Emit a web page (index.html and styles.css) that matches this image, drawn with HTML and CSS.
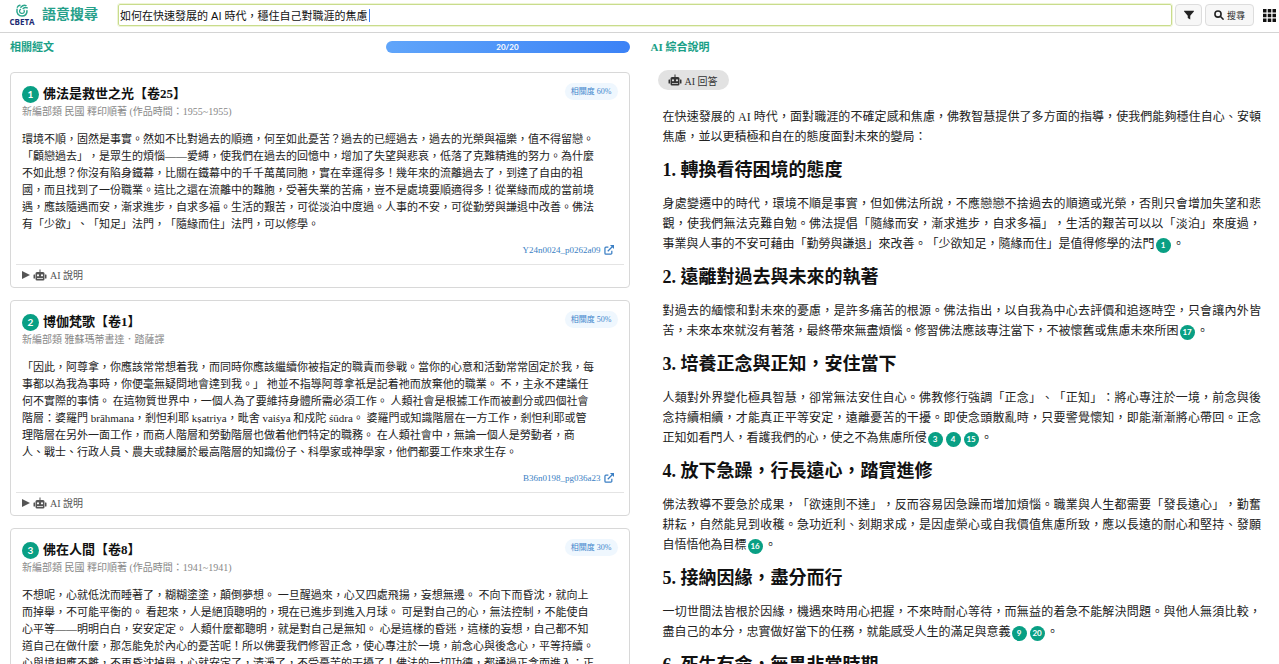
FILE: index.html
```html
<!DOCTYPE html>
<html lang="zh-Hant">
<head>
  <meta charset="UTF-8">
  <meta name="viewport" content="width=device-width, initial-scale=1.0">
  <title>CBETA 語意搜尋</title>
  <link rel="stylesheet" href="styles.css">
</head>
<body>
  <!-- shared icons -->
  <svg class="icon-defs" aria-hidden="true">
    <symbol id="icon-robot" viewBox="0 0 28 24">
      <path fill="currentColor" fill-rule="evenodd" d="M13 1h2v5h5a3 3 0 0 1 3 3v11a3 3 0 0 1-3 3H8a3 3 0 0 1-3-3V9a3 3 0 0 1 3-3h5zM10 10.500a2.200 2.200 0 1 0 0 4.400a2.200 2.200 0 1 0 0-4.400zM18 10.500a2.200 2.200 0 1 0 0 4.400a2.200 2.200 0 1 0 0-4.400zM8.500 18v1.800h3V18zM12.500 18v1.800h3V18zM16.500 18v1.800h3V18zM1 12a1 1 0 0 1 1-1h2v8H2a1 1 0 0 1-1-1zM24 11h2a1 1 0 0 1 1 1v6a1 1 0 0 1-1 1h-2z"/>
    </symbol>
    <symbol id="icon-open" viewBox="0 0 16 16">
      <path fill="none" stroke="currentColor" stroke-width="2" d="M7 3.500H3A1.500 1.500 0 0 0 1.500 5v8A1.500 1.500 0 0 0 3 14.500h8a1.500 1.500 0 0 0 1.500-1.500V9M6 10l8-8"/>
      <path fill="currentColor" d="M9.500 0H16v6.500z"/>
    </symbol>
  </svg>

  <header class="topbar">
    <a class="brand" href="#">
      <span class="logo">
        <svg viewBox="0 0 24 22" aria-hidden="true">
          <g fill="none" stroke="#2aa58c" stroke-linecap="round">
            <path stroke-width="2.600" d="M3.500 9c-1.500 7 3 11.500 8.500 11.500S21 17 20.500 11.500"/>
            <path stroke-width="2.200" d="M9.500 9c-2.500 2-2.500 6.500 1.500 7s6-2.500 4.500-5.500"/>
            <path stroke-width="2.400" d="M10 5.500C12.500 2.500 16 1.500 19 2.500M14 7.500c2-1.500 4.500-2 7-1M4 5.500c1-2 2.500-3 4.500-3.500"/>
          </g>
        </svg>
        <span class="logo-name">CBETA</span>
      </span>
      <span class="brand-title">語意搜尋</span>
    </a>
    <form class="search" onsubmit="return false">
      <input type="text" class="search-input" aria-label="搜尋問題" value="如何在快速發展的 AI 時代，穩住自己對職涯的焦慮">
      <button type="button" class="btn" aria-label="篩選">
        <svg class="icon-filter" viewBox="0 0 12 12" aria-hidden="true"><path fill="currentColor" d="M.5 1h11c.5 0 .6.500.300.900L7.500 7v4.500L4.500 9.500V7L.2 1.900C-.1 1.500 0 1 .5 1z"/></svg>
      </button>
      <button type="submit" class="btn btn-search">
        <svg class="icon-search" viewBox="0 0 12 12" aria-hidden="true"><g fill="none" stroke="currentColor" stroke-width="1.900"><circle cx="4.800" cy="4.800" r="3.700"/><path d="M7.500 7.500l4 4"/></g></svg>
        搜尋
      </button>
    </form>
    <button type="button" class="apps" aria-label="選單">
      <svg viewBox="0 0 13 13" aria-hidden="true"><path fill="#111" d="M0 0h3.500v3.500H0zM4.750 0h3.500v3.500h-3.500zM9.500 0H13v3.500H9.500zM0 4.750h3.500v3.500H0zM4.750 4.750h3.500v3.500h-3.500zM9.500 4.750H13v3.500H9.500zM0 9.500h3.500V13H0zM4.750 9.500h3.500V13h-3.500zM9.500 9.500H13V13H9.500z"/></svg>
    </button>
  </header>

  <main class="panes">
    <section class="pane results">
      <div class="pane-head">
        <h2>相關經文</h2>
        <div class="progress">20/20</div>
      </div>

      <article class="card">
        <div class="card-top">
          <span class="num">1</span>
          <h3>佛法是救世之光【卷25】</h3>
          <span class="score">相關度 60%</span>
        </div>
        <p class="meta">新編部類 民國 釋印順著 (作品時間：1955~1955)</p>
        <p class="text">環境不順，固然是事實。然如不比對過去的順適，何至如此憂苦？過去的已經過去，過去的光榮與福樂，值不得留戀。「顧戀過去」，是眾生的煩惱——愛縛，使我們在過去的回憶中，增加了失望與悲哀，低落了克難精進的努力。為什麼不如此想？你沒有陷身鐵幕，比關在鐵幕中的千千萬萬同胞，實在幸運得多！幾年來的流離過去了，到達了自由的祖國，而且找到了一份職業。這比之還在流離中的難胞，受著失業的苦痛，豈不是處境要順適得多！從業緣而成的當前境遇，應該隨遇而安，漸求進步，自求多福。生活的艱苦，可從淡泊中度過。人事的不安，可從勤勞與謙退中改善。佛法有「少欲」、「知足」法門，「隨緣而住」法門，可以修學。</p>
        <a class="source" href="#">Y24n0024_p0262a09 <svg><use href="#icon-open"/></svg></a>
        <details>
          <summary><svg class="icon-robot"><use href="#icon-robot"/></svg>AI 說明</summary>
        </details>
      </article>

      <article class="card">
        <div class="card-top">
          <span class="num">2</span>
          <h3>博伽梵歌【卷1】</h3>
          <span class="score">相關度 50%</span>
        </div>
        <p class="meta">新編部類 雅蘇瑪蒂書達．踏薩譯</p>
        <p class="text">「因此，阿尊拿，你應該常常想着我，而同時你應該繼續你被指定的職責而參戰。當你的心意和活動常常固定於我，每事都以為我為事時，你便毫無疑問地會達到我。」 祂並不指導阿尊拿祇是記着祂而放棄他的職業。 不，主永不建議任何不實際的事情。 在這物質世界中，一個人為了要維持身體所需必須工作。 人類社會是根據工作而被劃分或四個社會階層：婆羅門 brāhmana，剎怛利耶 kṣatriya，毗舍 vaiśya 和戍陀 śūdra。 婆羅門或知識階層在一方工作，剎怛利耶或管理階層在另外一面工作，而商人階層和勞動階層也做着他們特定的職務。 在人類社會中，無論一個人是勞動者，商人、戰士、行政人員、農夫或隸屬於最高階層的知識份子、科學家或神學家，他們都要工作來求生存。</p>
        <a class="source" href="#">B36n0198_pg036a23 <svg><use href="#icon-open"/></svg></a>
        <details>
          <summary><svg class="icon-robot"><use href="#icon-robot"/></svg>AI 說明</summary>
        </details>
      </article>

      <article class="card">
        <div class="card-top">
          <span class="num">3</span>
          <h3>佛在人間【卷8】</h3>
          <span class="score">相關度 30%</span>
        </div>
        <p class="meta">新編部類 民國 釋印順著 (作品時間：1941~1941)</p>
        <p class="text">不想呢，心就低沈而睡著了，糊糊塗塗，顛倒夢想。 一旦醒過來，心又四處飛揚，妄想無邊。 不向下而昏沈，就向上而掉舉，不可能平衡的。 看起來，人是絕頂聰明的，現在已進步到進入月球。 可是對自己的心，無法控制，不能使自心平等——明明白白，安安定定。 人類什麼都聰明，就是對自己是無知。 心是這樣的昏迷，這樣的妄想，自己都不知道自己在做什麼，那怎能免於內心的憂苦呢！所以佛要我們修習正念，使心專注於一境，前念心與後念心，平等持續。心與境相應不離，不再昏沈掉舉，心就安定了，清淨了，不受憂苦的干擾了！佛法的一切功德，都通過正念而進入；正</p>
      </article>
    </section>

    <section class="pane answer">
      <div class="pane-head">
        <h2>AI 綜合說明</h2>
      </div>
      <div class="pill"><svg class="icon-robot"><use href="#icon-robot"/></svg>AI 回答</div>
      <div class="answer-body">
        <p>在快速發展的 AI 時代，面對職涯的不確定感和焦慮，佛教智慧提供了多方面的指導，使我們能夠穩住自心、安頓焦慮，並以更積極和自在的態度面對未來的變局：</p>

        <h3>1. 轉換看待困境的態度</h3>
        <p>身處變遷中的時代，環境不順是事實，但如佛法所說，不應戀戀不捨過去的順適或光榮，否則只會增加失望和悲觀，使我們無法克難自勉。佛法提倡「隨緣而安，漸求進步，自求多福」，生活的艱苦可以以「淡泊」來度過，事業與人事的不安可藉由「勤勞與謙退」來改善。「少欲知足，隨緣而住」是值得修學的法門<a class="cite" href="#">1</a>。</p>

        <h3>2. 遠離對過去與未來的執著</h3>
        <p>對過去的緬懷和對未來的憂慮，是許多痛苦的根源。佛法指出，以自我為中心去評價和追逐時空，只會讓內外皆苦，未來本來就沒有著落，最終帶來無盡煩惱。修習佛法應該專注當下，不被懷舊或焦慮未來所困<a class="cite" href="#">17</a>。</p>

        <h3>3. 培養正念與正知，安住當下</h3>
        <p>人類對外界變化極具智慧，卻常無法安住自心。佛教修行強調「正念」、「正知」：將心專注於一境，前念與後念持續相續，才能真正平等安定，遠離憂苦的干擾。即使念頭散亂時，只要警覺懷知，即能漸漸將心帶回。正念正知如看門人，看護我們的心，使之不為焦慮所侵<a class="cite" href="#">3</a><a class="cite" href="#">4</a><a class="cite" href="#">15</a>。</p>

        <h3>4. 放下急躁，行長遠心，踏實進修</h3>
        <p>佛法教導不要急於成果，「欲速則不達」，反而容易因急躁而增加煩惱。職業與人生都需要「發長遠心」，勤奮耕耘，自然能見到收穫。急功近利、刻期求成，是因虛榮心或自我價值焦慮所致，應以長遠的耐心和堅持、發願自悟悟他為目標<a class="cite" href="#">16</a>。</p>

        <h3>5. 接納因緣，盡分而行</h3>
        <p>一切世間法皆根於因緣，機遇來時用心把握，不來時耐心等待，而無益的着急不能解決問題。與他人無須比較，盡自己的本分，忠實做好當下的任務，就能感受人生的滿足與意義<a class="cite" href="#">9</a><a class="cite" href="#">20</a>。</p>

        <h3>6. 死生有命，無畏非常時期</h3>
      </div>
    </section>
  </main>
</body>
</html>
```
FILE: styles.css
```css
* {
  box-sizing: border-box;
}
body {
  margin: 0;
  height: 100vh;
  display: flex;
  flex-direction: column;
  background: #fff;
  color: #222;
  font-family: 'Liberation Serif', 'Noto Sans CJK TC', serif;
  text-spacing-trim: space-all;
}
h2, h3, p {
  margin: 0;
}
a {
  text-decoration: none;
}
.icon-defs {
  display: none;
}

/* top bar */
.topbar {
  flex: none;
  display: flex;
  align-items: center;
  height: 33px;
  padding: 0 3px 2px 8px;
  border-bottom: 1px solid #d4d4d4;
}
.brand {
  display: flex;
  align-items: center;
  gap: 6px;
  margin-right: 20px;
}
.logo {
  display: flex;
  flex-direction: column;
  align-items: center;
  width: 28px;
}
.logo svg {
  width: 14px;
  height: 13px;
}
.logo-name {
  font: bold 8px/9px 'Open Sans', sans-serif;
  color: #1d2a72;
}
.brand-title {
  font-size: 14px;
  font-weight: bold;
  line-height: 20px;
  color: #26a08a;
}
.search {
  flex: 1;
  display: flex;
  gap: 3px;
}
.search-input {
  flex: 1;
  min-width: 0;
  height: 22px;
  padding: 0 1px;
  border: 1px solid #c9dc8c;
  border-radius: 2px;
  outline: 1px solid #eef5d6;
  color: #111;
  font: 11px 'Liberation Sans', 'Noto Sans CJK TC', sans-serif;
  /* text cursor */
  background: linear-gradient(#3b82f6, #3b82f6) no-repeat 250px center / 1px 13px;
}
.btn {
  display: flex;
  align-items: center;
  justify-content: center;
  gap: 3px;
  width: 27px;
  height: 22px;
  padding: 0;
  border: 1px solid #ddd;
  border-radius: 4px;
  background: #f7f7f7;
  color: #222;
  font: 9px 'Noto Sans CJK TC', sans-serif;
  cursor: pointer;
}
.btn-search {
  width: 49px;
}
.icon-filter, .icon-search {
  width: 10px;
  height: 10px;
}
.apps {
  display: flex;
  margin-left: 9px;
  padding: 0;
  border: none;
  background: none;
  cursor: pointer;
}
.apps svg {
  width: 13px;
  height: 13px;
}

/* two columns */
.panes {
  flex: 1;
  min-height: 0;
  display: grid;
  grid-template-columns: 1fr 1fr;
}
.pane {
  overflow-y: auto;
  scrollbar-width: none;
  padding: 6px 10px;
}
.pane-head {
  display: flex;
  align-items: center;
  justify-content: space-between;
  height: 16px;
}
.pane-head h2 {
  font-size: 11px;
  line-height: 16px;
  color: #1a9f87;
}
.progress {
  width: 39%;
  min-width: 244px;
  height: 12px;
  border-radius: 6px;
  background: linear-gradient(90deg, #60a5fa, #3b82f6);
  color: #fff;
  font: bold 8px/12px Lato, sans-serif;
  text-align: center;
}

/* result cards */
.card {
  margin-bottom: 12px;
  padding: 10px 11px 0;
  border: 1px solid #d8d8d8;
  border-radius: 4px;
}
.pane-head + .card {
  margin-top: 17px;
}
.card-top {
  display: flex;
  align-items: center;
  gap: 4px;
  height: 22px;
}
.card-top h3 {
  font-size: 13px;
  line-height: 22px;
  color: #111;
}
.num {
  width: 17px;
  height: 17px;
  border-radius: 50%;
  background: #099f84;
  color: #fff;
  font: bold 10px/17px Lato, sans-serif;
  text-align: center;
}
.score {
  align-self: flex-start;
  margin-left: auto;
  padding: 0 6px;
  border-radius: 9px;
  background: #eff7fe;
  color: #3f86cc;
  font-size: 8px;
  line-height: 17px;
}
.meta {
  font-size: 10px;
  line-height: 14px;
  color: #888;
}
.text {
  margin: 12px 22px 9px 0;
  font-size: 11px;
  line-height: 17px;
}
.source {
  display: flex;
  align-items: center;
  justify-content: flex-end;
  gap: 3px;
  height: 16px;
  margin-right: 4px;
  color: #3b7fc4;
  font-size: 9px;
}
.source svg {
  width: 10px;
  height: 10px;
}
details {
  margin: 6px -6px 0;
  padding: 0 6px 3px;
  border-top: 1px solid #e4e4e4;
}
summary {
  display: flex;
  align-items: center;
  gap: 3px;
  height: 19px;
  color: #555;
  font-size: 10px;
  cursor: pointer;
}
summary::before {
  content: '';
  border-left: 8px solid #555;
  border-top: 4px solid transparent;
  border-bottom: 4px solid transparent;
}
.icon-robot {
  width: 14px;
  height: 12px;
}

/* AI answer */
.pill {
  display: inline-flex;
  align-items: center;
  gap: 3px;
  height: 20px;
  margin: 15px 0 0 7px;
  padding: 0 11px 0 10px;
  border-radius: 10px;
  background: #e2e2e2;
  color: #333;
  font-size: 10px;
}
.answer {
  padding-left: 11px;
}
.answer-body {
  padding: 17px 8px 0 12px;
  font-size: 12px;
  line-height: 20px;
}
.answer-body p {
  text-align: justify;
}
.answer-body h3 {
  margin: 11px 0 12px;
  font-size: 18px;
  line-height: 24px;
  color: #111;
}
.cite {
  display: inline-block;
  width: 15px;
  height: 15px;
  margin: 0 2px 0 1px;
  border-radius: 50%;
  background: #099f84;
  color: #fff;
  font: bold 8px/15px Lato, sans-serif;
  text-align: center;
  vertical-align: middle;
}
```
